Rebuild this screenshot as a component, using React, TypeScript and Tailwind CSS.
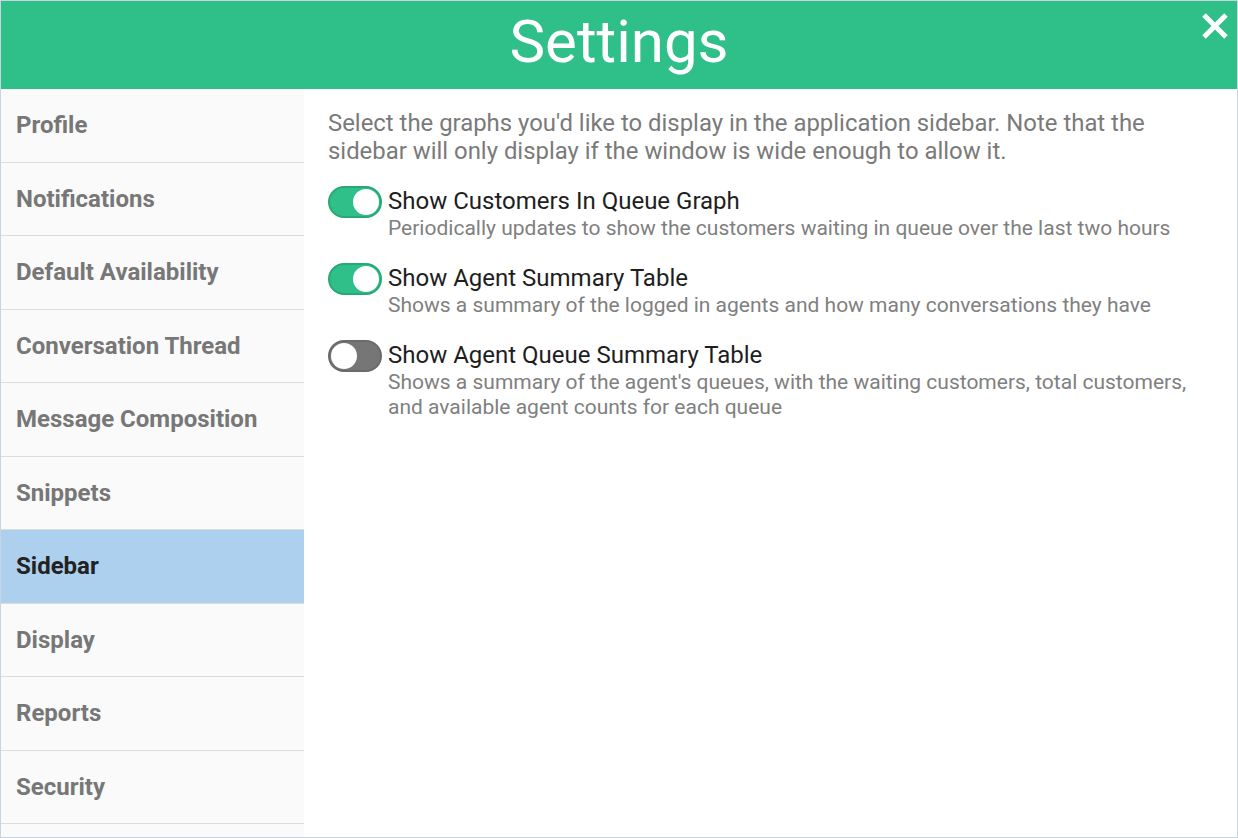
import React from "react";

const items = [
  "Profile",
  "Notifications",
  "Default Availability",
  "Conversation Thread",
  "Message Composition",
  "Snippets",
  "Sidebar",
  "Display",
  "Reports",
  "Security",
];

function Toggle({ on }: { on: boolean }) {
  return on ? (
    <div className="relative w-[54px] h-[32px] rounded-full bg-[#2fbf88] border-2 border-[#27a875] shrink-0">
      <div className="absolute right-[1px] top-[1px] w-[26px] h-[26px] rounded-full bg-white" />
    </div>
  ) : (
    <div className="relative w-[54px] h-[32px] rounded-full bg-[#767676] border-2 border-[#6a6a6a] shrink-0">
      <div className="absolute left-[1px] top-[1px] w-[26px] h-[26px] rounded-full bg-white" />
    </div>
  );
}

const options = [
  {
    on: true,
    title: "Show Customers In Queue Graph",
    desc: "Periodically updates to show the customers waiting in queue over the last two hours",
  },
  {
    on: true,
    title: "Show Agent Summary Table",
    desc: "Shows a summary of the logged in agents and how many conversations they have",
  },
  {
    on: false,
    title: "Show Agent Queue Summary Table",
    desc: "Shows a summary of the agent's queues, with the waiting customers, total customers, and available agent counts for each queue",
  },
];

export default function App() {
  return (
    <div
      className="w-[1238px] h-[838px] bg-white border border-[#c6d5e0] flex flex-col overflow-hidden"
      style={{ fontFamily: "Roboto, 'Liberation Sans', sans-serif" }}
    >
      <div className="relative h-[88px] bg-[#2fbf88] flex items-center justify-center shrink-0">
        <h1 className="text-white text-[60px] leading-none font-normal -mt-[6px]">Settings</h1>
        <svg
          className="absolute right-[8px] top-[11px]"
          width="28"
          height="28"
          viewBox="0 0 28 28"
        >
          <path d="M3 3 L25 25 M25 3 L3 25" stroke="white" strokeWidth="5" strokeLinecap="butt" />
        </svg>
      </div>
      <div className="flex flex-1 min-h-0">
        <div className="w-[303px] bg-[#fafafa] shrink-0 flex flex-col">
          {items.map((it) => (
            <div
              key={it}
              className={`h-[73.5px] shrink-0 flex items-center pl-[15px] border-b border-[#dcdcdc] text-[24px] font-bold ${
                it === "Sidebar" ? "bg-[#add0ee] text-[#222222]" : "text-[#777777]"
              }`}
            >
              {it}
            </div>
          ))}
        </div>
        <div className="flex-1 pl-[24px] pr-[20px] pt-[20px]">
          <p className="text-[23.9px] leading-[28px] text-[#7a7a7a]">
            Select the graphs you'd like to display in the application sidebar. Note that the
            <br />
            sidebar will only display if the window is wide enough to allow it.
          </p>
          <div className="mt-[21px] flex flex-col gap-[22px]">
            {options.map((o) => (
              <div key={o.title} className="flex gap-[6px]">
                <div>
                  <Toggle on={o.on} />
                </div>
                <div className="flex flex-col">
                  <div className="text-[24px] leading-[30px] text-[#1e1e1e]">{o.title}</div>
                  <div className="text-[21px] leading-[25px] text-[#808080] max-w-[820px]">{o.desc}</div>
                </div>
              </div>
            ))}
          </div>
        </div>
      </div>
    </div>
  );
}
